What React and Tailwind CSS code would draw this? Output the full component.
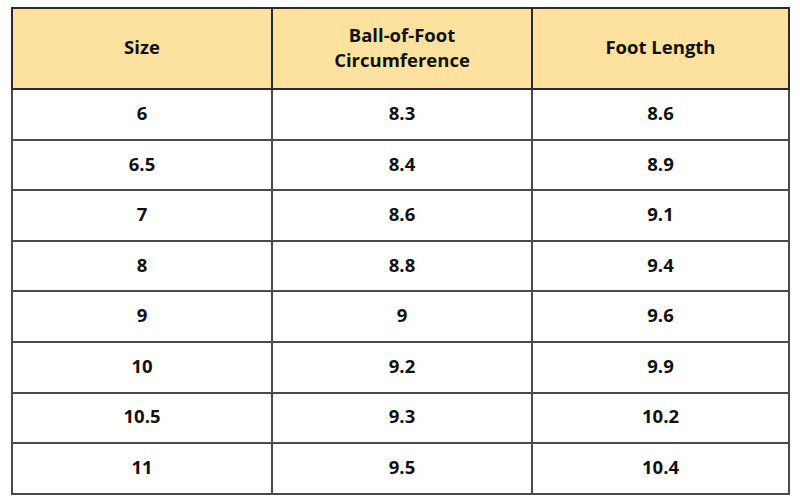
import React from "react";

const rows = [
  ["6", "8.3", "8.6"],
  ["6.5", "8.4", "8.9"],
  ["7", "8.6", "9.1"],
  ["8", "8.8", "9.4"],
  ["9", "9", "9.6"],
  ["10", "9.2", "9.9"],
  ["10.5", "9.3", "10.2"],
  ["11", "9.5", "10.4"],
];

export default function App() {
  return (
    <div className="w-[800px] h-[500px] bg-white pt-[7px] pl-[11px] font-['Open_Sans',sans-serif] text-[#111]">
      <table className="w-[779px] border-collapse border-2 border-[#2b2b2b] text-[18.5px] font-bold">
        <thead>
          <tr className="h-[81px] bg-[#fde29f]">
            <th className="w-[260px] border-2 border-[#2b2b2b] font-bold pb-[3px]">Size</th>
            <th className="w-[260px] border-2 border-[#2b2b2b] font-bold leading-[25px] pb-[3px]">
              Ball-of-Foot
              <br />
              Circumference
            </th>
            <th className="border-2 border-[#2b2b2b] font-bold pb-[3px]">Foot Length</th>
          </tr>
        </thead>
        <tbody>
          {rows.map((r, i) => (
            <tr key={i} className="h-[50.6px]">
              {r.map((c, j) => (
                <td key={j} className="border-2 border-[#4a4a4a] text-center pb-[3px]">
                  {c}
                </td>
              ))}
            </tr>
          ))}
        </tbody>
      </table>
    </div>
  );
}
